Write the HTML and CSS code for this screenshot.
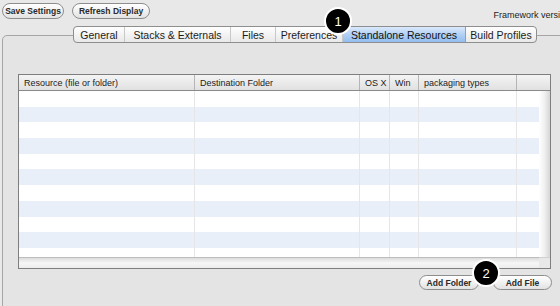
FILE: index.html
```html
<!DOCTYPE html>
<html lang="en">
<head>
    <meta charset="UTF-8">
    <title>Standalone Resources</title>
    <link rel="stylesheet" href="styles.css">
</head>
<body>
    <div class="window">
        <div class="toolbar">
            <button class="pill-btn save-btn">Save Settings</button>
            <button class="pill-btn refresh-btn">Refresh Display</button>
            <span class="framework">Framework version</span>
        </div>

        <div class="panel">
            <div class="tabs">
                <div class="tab tab-general">General</div>
                <div class="tab tab-stacks">Stacks &amp; Externals</div>
                <div class="tab tab-files">Files</div>
                <div class="tab tab-prefs">Preferences</div>
                <div class="tab tab-standalone active">Standalone Resources</div>
                <div class="tab tab-build">Build Profiles</div>
            </div>

            <div class="resource-table">
                <div class="table-head">
                    <div class="col col-resource">Resource (file or folder)</div>
                    <div class="col col-dest">Destination Folder</div>
                    <div class="col col-osx">OS X</div>
                    <div class="col col-win">Win</div>
                    <div class="col col-types">packaging types</div>
                    <div class="col col-rest"></div>
                </div>
                <div class="table-body">
                    <div class="col col-resource"></div>
                    <div class="col col-dest"></div>
                    <div class="col col-osx"></div>
                    <div class="col col-win"></div>
                    <div class="col col-types"></div>
                    <div class="col col-fill"></div>
                    <div class="vscroll"></div>
                </div>
                <div class="table-foot">
                    <div class="hscroll"></div>
                    <div class="corner"></div>
                </div>
            </div>

            <div class="table-actions">
                <button class="pill-btn add-folder">Add Folder</button>
                <button class="pill-btn add-file">Add File</button>
            </div>
        </div>

        <div class="badge badge-one">1</div>
        <div class="badge badge-two">2</div>
    </div>
</body>
</html>
```

FILE: styles.css
```css
body {
    margin: 0;
    background: #e8e8e8;
    font-family: "Liberation Sans", Arial, sans-serif;
    color: #1c1c1c;
    overflow: hidden;
}

.window {
    position: relative;
    width: 560px;
    height: 306px;
    overflow: hidden;
}

.toolbar {
    display: flex;
    align-items: center;
    height: 16px;
    padding: 3px 0 0 2px;
}

.pill-btn {
    height: 16px;
    padding: 0;
    border: 1px solid #8d8d8d;
    border-radius: 8px;
    background: linear-gradient(#ffffff, #f1f1f1 50%, #e2e2e2);
    font-family: "Liberation Sans", Arial, sans-serif;
    font-size: 8.5px;
    font-weight: bold;
    color: #2a2a2a;
    box-sizing: border-box;
}

.save-btn {
    width: 62px;
}

.refresh-btn {
    width: 78px;
    margin-left: 8px;
}

.framework {
    margin-left: auto;
    margin-right: -10px;
    padding-top: 8px;
    font-size: 9px;
    white-space: nowrap;
}

.panel {
    width: 604px;
    height: 300px;
    margin: 16px 0 0 2px;
    border: 1px solid #a6a6a6;
    border-radius: 5px;
    background: #e4e4e4;
}

.tabs {
    display: flex;
    width: 464px;
    height: 17px;
    margin: -10px 0 0 70px;
    border: 1px solid #8e8e8e;
    border-radius: 4px;
    background: linear-gradient(#ffffff, #f3f3f3 50%, #e9e9e9);
    box-sizing: border-box;
    overflow: hidden;
}

.tab {
    display: flex;
    align-items: center;
    justify-content: center;
    font-size: 10.5px;
    border-right: 1px solid #c8c8c8;
    white-space: nowrap;
}

.tab:last-child {
    border-right: none;
}

.tab-general { width: 50px; }
.tab-stacks { width: 105px; }
.tab-files { width: 44px; }
.tab-prefs { width: 66px; }
.tab-standalone { width: 122px; }
.tab-build { flex: 1; }

.tab.active {
    background: linear-gradient(#dbe9fb, #b2d0f4 50%, #92bdf0);
    border-right-color: #7aa3d8;
    color: #111;
}

.resource-table {
    width: 533px;
    margin: 31px 0 0 15px;
    border: 1px solid #7e7e7e;
    background: #fff;
    box-sizing: border-box;
}

.table-head {
    display: flex;
    height: 15px;
    border-bottom: 1px solid #8a8a8a;
    background: linear-gradient(#f4f4f4, #e1e1e1);
    font-size: 9px;
}

.table-head .col {
    display: flex;
    align-items: center;
    padding-left: 5px;
    border-right: 1px solid #b5b5b5;
    box-sizing: border-box;
    white-space: nowrap;
}

.table-head .col-rest {
    flex: 1;
    border-right: none;
}

.col-resource { width: 176px; }
.col-dest { width: 165px; }
.col-osx { width: 30px; }
.col-win { width: 29px; }
.col-types { width: 98px; }

.table-body {
    display: flex;
    height: 166px;
    background: repeating-linear-gradient(#ffffff 0, #ffffff 15.7px, #e9eff8 15.7px, #e9eff8 31.4px);
}

.table-body .col {
    border-right: 1px solid #e6e6e6;
    box-sizing: border-box;
}

.table-body .col-fill {
    flex: 1;
    border-right: none;
}

.vscroll {
    width: 11px;
    background: linear-gradient(90deg, #ffffff, #f0f0f0 50%, #d6d6d6);
}

.table-foot {
    display: flex;
    height: 11px;
}

.hscroll {
    flex: 1;
    border-top: 1px solid #bdbdbd;
    background: linear-gradient(#dcdcdc, #f6f6f6 50%, #ececec);
}

.corner {
    width: 11px;
    background: #e8e8e8;
    border-top: 1px solid #d0d0d0;
}

.table-actions {
    display: flex;
    gap: 14px;
    margin: 6px 0 0 416px;
}

.add-folder {
    width: 60px;
    height: 15px;
}

.add-file {
    width: 59px;
    height: 15px;
}

.badge {
    position: absolute;
    width: 28px;
    height: 28px;
    border: 2px solid #ffffff;
    border-radius: 50%;
    background: #000;
    color: #fff;
    font-family: "Liberation Sans", Arial, sans-serif;
    font-size: 13px;
    display: flex;
    align-items: center;
    justify-content: center;
    box-sizing: border-box;
}

.badge-one {
    left: 324px;
    top: 7px;
}

.badge-two {
    left: 472px;
    top: 259px;
}
```
